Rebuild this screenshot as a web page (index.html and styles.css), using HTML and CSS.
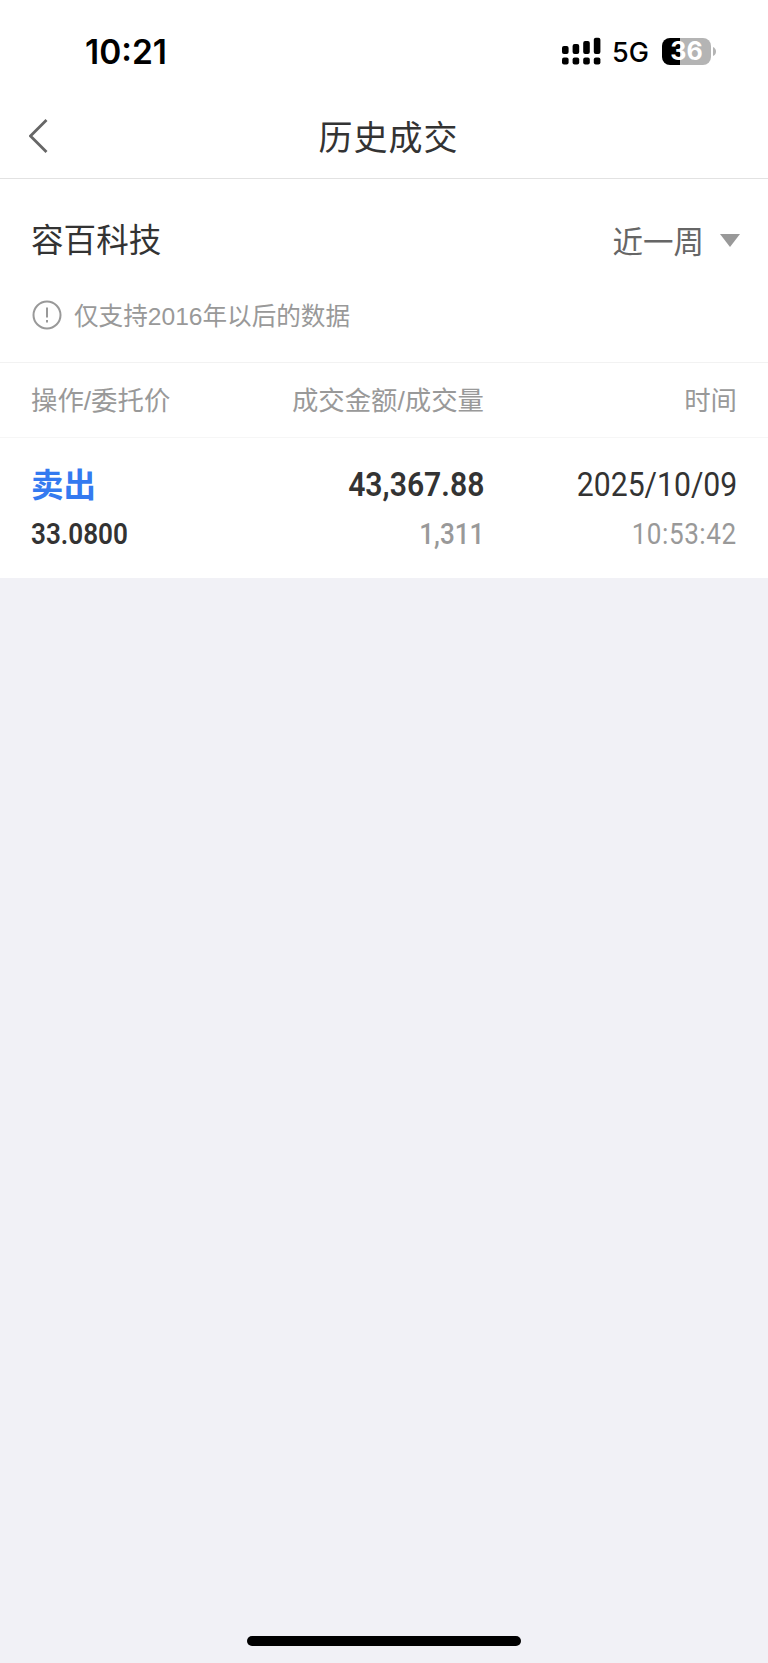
FILE: index.html
```
<!DOCTYPE html>
<html lang="zh-CN">
<head>
  <meta charset="UTF-8" />
  <meta name="viewport" content="width=device-width, initial-scale=1.0"/>
  <title>历史成交</title>
  <link rel="stylesheet" href="styles.css">
</head>
<body>

  <header class="status-bar">
    <span class="clock">10:21</span>
    <div class="status-icons">
      <svg class="signal" width="39" height="28" viewBox="0 0 39 28">
        <rect x="0" y="9" width="6.6" height="8" rx="2"/>
        <rect x="10.6" y="7" width="6.6" height="10" rx="2"/>
        <rect x="21.2" y="4" width="6.6" height="13" rx="2"/>
        <rect x="31.8" y="0.8" width="6.6" height="16.2" rx="2"/>
        <rect x="0" y="20.5" width="6.6" height="7" rx="2"/>
        <rect x="10.6" y="20.5" width="6.6" height="7" rx="2"/>
        <rect x="21.2" y="20.5" width="6.6" height="7" rx="2"/>
        <rect x="31.8" y="20.5" width="6.6" height="7" rx="2"/>
      </svg>
      <span class="network">5G</span>
      <span class="battery">36</span>
      <svg class="battery-cap" width="3" height="9" viewBox="0 0 3 9"><path d="M0 0Q3 1.5 3 4.5Q3 7.5 0 9Z"/></svg>
    </div>
  </header>

  <nav class="nav-bar">
    <svg class="back" width="20" height="36" viewBox="0 0 20 36"><path d="M17.5 2L1.5 18L17.5 34"/></svg>
    <h1 class="title">历史成交</h1>
  </nav>

  <section class="filter">
    <div class="filter-row">
      <h2 class="stock">容百科技</h2>
      <div class="period">
        <span>近一周</span>
        <svg width="20" height="13" viewBox="0 0 20 13"><path d="M0 0H20L10 13Z"/></svg>
      </div>
    </div>
    <div class="notice">
      <svg width="30" height="30" viewBox="0 0 30 30">
        <circle cx="15" cy="15" r="13.5"/>
        <path d="M15 7.5V17.5M15 20V22.5"/>
      </svg>
      <span>仅支持2016年以后的数据</span>
    </div>
  </section>

  <div class="table-head">
    <span>操作/委托价</span>
    <span>成交金额/成交量</span>
    <span>时间</span>
  </div>

  <div class="record">
    <div class="cell">
      <span class="side">卖出</span>
      <span class="num small strong">33.0800</span>
    </div>
    <div class="cell">
      <span class="num strong">43,367.88</span>
      <span class="num small gray medium">1,311</span>
    </div>
    <div class="cell">
      <span class="num">2025/10/09</span>
      <span class="num small gray time">10:53:42</span>
    </div>
  </div>

  <div class="home-indicator"></div>

</body>
</html>
```

FILE: styles.css
```
* {
  box-sizing: border-box;
}

body {
  margin: 0;
  min-height: 1663px;
  display: flex;
  flex-direction: column;
  font-family: "Liberation Sans", "Noto Sans CJK SC", sans-serif;
  background-color: #f1f1f6;
  color: #333;
}

h1, h2 {
  margin: 0;
  font-weight: 400;
}

.status-bar {
  height: 94px;
  padding: 8px 52px 0 85px;
  display: flex;
  justify-content: space-between;
  align-items: center;
  background: #fff;
  color: #000;
  font-family: Inter, sans-serif;
}

.clock {
  padding-top: 1px;
  font-size: 33.5px;
  font-weight: 600;
}

.status-icons {
  display: flex;
  align-items: center;
}

.network {
  width: 60px;
  padding: 3px 0 0 11px;
  font-size: 27px;
  font-weight: 500;
  line-height: 28px;
}

.battery {
  width: 49px;
  height: 27px;
  margin-left: 1px;
  border-radius: 8px;
  background: linear-gradient(90deg, #000 18px, #b4b4b4 18px);
  color: #fff;
  font-size: 25px;
  font-weight: 700;
  line-height: 27px;
  text-align: center;
}

.battery-cap {
  margin-left: 2px;
  fill: #b4b4b4;
}

.nav-bar {
  height: 85px;
  padding: 0 30px 0 29px;
  display: grid;
  grid-template-columns: 20px 1fr 20px;
  align-items: center;
  background: #fff;
  border-bottom: 1px solid #e2e2e2;
}

.back {
  fill: none;
  stroke: #666;
  stroke-width: 2.8;
}

.title {
  padding: 3px 0 0 10px;
  text-align: center;
  font-size: 34px;
  line-height: 50px;
  letter-spacing: 1px;
}

.filter {
  height: 184px;
  padding: 35px 28px 0 31px;
  background: #fff;
  border-bottom: 1px solid #f2f2f2;
}

.filter-row {
  display: flex;
  justify-content: space-between;
  align-items: center;
  height: 50px;
}

.stock {
  padding-bottom: 3px;
  font-size: 32.6px;
}

.period {
  display: flex;
  align-items: center;
  gap: 16px;
  padding-top: 2px;
  font-size: 30.5px;
  color: #666;
}

.period svg {
  fill: #999;
}

.notice {
  display: flex;
  align-items: center;
  gap: 12px;
  height: 40px;
  margin-top: 31px;
  padding-left: 1px;
  font-size: 24.6px;
  color: #999;
}

.notice span {
  padding-bottom: 3px;
}

.notice svg {
  fill: none;
  stroke: #999;
  stroke-width: 2;
}

.table-head,
.record {
  display: grid;
  grid-template-columns: 200px 253px 1fr;
  padding: 0 31px;
  background: #fff;
}

.table-head {
  height: 75px;
  padding-bottom: 3px;
  align-items: center;
  border-bottom: 1px solid #f6f6f6;
  font-size: 26.4px;
  color: #999;
}

.table-head span:not(:first-child) {
  text-align: right;
}

.record {
  height: 140px;
  padding-top: 22px;
}

.cell {
  display: flex;
  flex-direction: column;
  align-items: flex-end;
}

.cell:first-child {
  align-items: flex-start;
}

.side {
  height: 50px;
  line-height: 52px;
  font-size: 32.5px;
  font-weight: 700;
  color: #347af0;
}

/* narrow digits */
.num {
  height: 50px;
  line-height: 50px;
  font-family: Roboto, sans-serif;
  font-size: 33.5px;
  transform: scaleX(0.9);
  transform-origin: right;
}

.cell:first-child .num {
  transform-origin: left;
}

.small {
  font-size: 29px;
  line-height: 48px;
}

.time {
  letter-spacing: 0.6px;
}

.medium {
  font-weight: 500;
}

.strong {
  font-weight: 600;
}

.gray {
  color: #999;
}

.home-indicator {
  width: 274px;
  height: 10px;
  margin: auto auto 17px;
  border-radius: 5px;
  background: #000;
}
```
